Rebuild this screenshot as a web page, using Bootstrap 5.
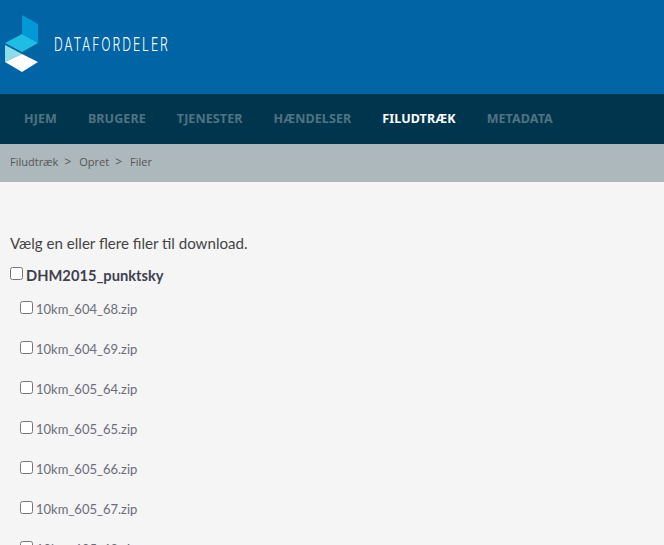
<!DOCTYPE html>
<html lang="da">
<head>
<meta charset="utf-8">
<title>Datafordeler</title>
<link rel="stylesheet" href="https://cdn.jsdelivr.net/npm/bootstrap@5.3.0/dist/css/bootstrap.min.css">
<style>
html,body{height:100%;overflow:hidden}
body{background:#f5f5f5;color:#444;font-family:"Lato","Open Sans",sans-serif}
.site-head{background:#0064a5;height:94px;padding:15px 0 0 5px}
.logo-word{font-family:"Inter",sans-serif;font-weight:300;font-size:18px;letter-spacing:2.8px;color:#fff;margin:0 0 0 15px;line-height:1;transform:scaleX(.68);transform-origin:left center;white-space:nowrap;padding-top:5px}
.main-menu{background:#00364d;height:50px;padding-left:8.5px}
.main-menu .nav-link{font-family:"Noto Sans",sans-serif;font-weight:700;font-size:12.5px;letter-spacing:.1px;color:#507283;padding:0 15.5px;line-height:50px}
.main-menu .nav-link.active{color:#fff}
.crumbs{background:#adb8bc;height:38px;padding:0 10px 2px;font-family:"Open Sans",sans-serif;font-size:11px;color:#555;margin:0;align-items:center}
.crumbs .breadcrumb-item{color:#555}
.crumbs .breadcrumb-item+.breadcrumb-item{padding-left:6px}
.crumbs .breadcrumb-item+.breadcrumb-item::before{content:">";color:#555;padding-right:8px;font-size:12px;float:none}
.page-body{padding:50px 10px 0}
.intro{font-size:15.1px;line-height:22px;margin:0 0 10px;color:#444}
.grp{font-weight:700;font-size:14.7px;line-height:22px;color:#3f3f4f;margin-bottom:10px}
.file-row{font-size:13px;line-height:20px;color:#6c6c7a;padding-left:10px;height:40px;padding-top:3px}
.tick{appearance:auto;width:13px;height:13px;margin:0 3px 0 0;accent-color:#666}
.lbl-wrap{display:flex;align-items:flex-start}
.lbl-wrap .tick{margin-top:3px}
.file-row .lbl-wrap .tick{margin-top:2px}
</style>
</head>
<body>
<header class="site-head d-flex align-items-start">
<svg width="34" height="58" viewBox="0 0 34 58" aria-hidden="true">
<polygon points="17,0 33,9 33,28 17,19" fill="#0099d6"/>
<polygon points="17,19 33,28 17,37 0,28" fill="#1fbce3"/>
<polygon points="0,30 17,39 0,47" fill="#8fdce9"/>
<polygon points="17,39 33,47 17,57 0,47" fill="#fff"/>
</svg>
<div class="logo-word align-self-center mb-4">DATAFORDELER</div>
</header>
<nav class="main-menu">
<ul class="nav">
<li class="nav-item"><a class="nav-link" href="#">HJEM</a></li>
<li class="nav-item"><a class="nav-link" href="#">BRUGERE</a></li>
<li class="nav-item"><a class="nav-link" href="#">TJENESTER</a></li>
<li class="nav-item"><a class="nav-link" href="#">HÆNDELSER</a></li>
<li class="nav-item"><a class="nav-link active" href="#">FILUDTRÆK</a></li>
<li class="nav-item"><a class="nav-link" href="#">METADATA</a></li>
</ul>
</nav>
<ol class="breadcrumb crumbs">
<li class="breadcrumb-item">Filudtræk</li>
<li class="breadcrumb-item">Opret</li>
<li class="breadcrumb-item">Filer</li>
</ol>
<main class="page-body">
<p class="intro">Vælg en eller flere filer til download.</p>
<div class="grp"><label class="lbl-wrap"><input class="tick" type="checkbox">DHM2015_punktsky</label></div>
<div class="file-row"><label class="lbl-wrap"><input class="tick" type="checkbox">10km_604_68.zip</label></div>
<div class="file-row"><label class="lbl-wrap"><input class="tick" type="checkbox">10km_604_69.zip</label></div>
<div class="file-row"><label class="lbl-wrap"><input class="tick" type="checkbox">10km_605_64.zip</label></div>
<div class="file-row"><label class="lbl-wrap"><input class="tick" type="checkbox">10km_605_65.zip</label></div>
<div class="file-row"><label class="lbl-wrap"><input class="tick" type="checkbox">10km_605_66.zip</label></div>
<div class="file-row"><label class="lbl-wrap"><input class="tick" type="checkbox">10km_605_67.zip</label></div>
<div class="file-row"><label class="lbl-wrap"><input class="tick" type="checkbox">10km_605_68.zip</label></div>
</main>
</body>
</html>
